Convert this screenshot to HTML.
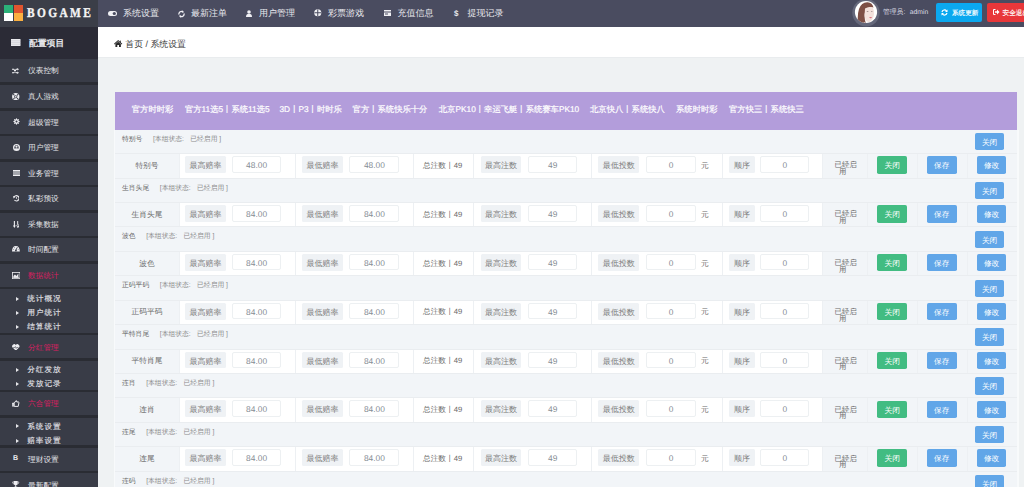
<!DOCTYPE html><html><head><meta charset="utf-8"><style>
*{margin:0;padding:0;box-sizing:border-box}
html,body{width:1024px;height:489px;overflow:hidden;background:#eff2f3;font-family:"Liberation Sans",sans-serif;position:relative;text-rendering:geometricPrecision}
.a{position:absolute}
.logo{left:0;top:0;width:98px;height:27px;background:#3b3e48}
.nav{left:98px;top:0;width:926px;height:27px;background:#4a4c60}
.nt{color:#e9e9ee;font-size:9px;line-height:9px;white-space:nowrap}
.side{left:0;top:27px;width:98px;height:462px;background:#393c47}
.sh{left:0;top:27px;width:98px;height:32.2px;background:#2b2b36}
.sep{left:0;width:98px;height:2.6px;background:#2a2c33}
.si{color:#e4e4e8;font-size:7.7px;line-height:8px;white-space:nowrap;left:28px}
.si.act{color:#d81f61}
.ss{color:#e2e2e8;font-size:7.68px;line-height:8px;letter-spacing:0.95px;white-space:nowrap;left:27.2px;-webkit-text-stroke:0.12px #e2e2e8}
.tri{width:0;height:0;border-left:3.2px solid #e6e6ea;border-top:2.3px solid transparent;border-bottom:2.3px solid transparent;left:16.2px}
.bc{left:98px;top:27px;width:926px;height:31px;background:#fff;border-bottom:1px solid #e9ecee}
.purple{left:114.8px;top:91.5px;width:902.2px;height:38.2px;background:#b39ddb}
.tab{color:#fff;font-size:8.32px;line-height:9px;white-space:nowrap;top:105px;-webkit-text-stroke:0.2px #fff}
.tbl{left:115.3px;top:129.7px;width:902px;height:360px;background:#f2f5f8}
.ttl{font-size:6.8px;line-height:7px;color:#666;white-space:nowrap}
.ttl .st{color:#8a8a8a}
.row{left:115.3px;width:902px;height:25.4px;border-top:1px solid #eaedf0;border-bottom:1px solid #eaedf0;background:#f2f5f8}
.cell{top:0;bottom:0;border-left:1px solid #edf0f3}
.w{background:#fff}
.lbl{background:#eff2f5;color:#7a7a7a;font-size:8px;line-height:19.1px;text-align:center;height:16.8px;border-radius:1.5px;white-space:nowrap}
.inp{background:#fff;border:0.7px solid #edf0f2;border-radius:2px;color:#858c94;font-size:8.4px;line-height:16.6px;text-align:center;height:16.6px}
.txt{color:#6a6a6a;font-size:7.7px;line-height:8px;white-space:nowrap}
.btn{color:#fff;font-size:7.7px;text-align:center;height:17.4px;line-height:19px;width:29.6px;border-radius:1.8px;white-space:nowrap}
.blue{background:#61a6e8}
.green{background:#42bc82}
</style></head><body>
<div class="a logo"></div>
<div class="a" style="left:4px;top:5px;width:9.2px;height:7.6px;background:#2bb179"></div>
<div class="a" style="left:14px;top:5px;width:9.2px;height:7.6px;background:#e0552f"></div>
<div class="a" style="left:4px;top:13px;width:9.2px;height:8px;background:#ffffff"></div>
<div class="a" style="left:14px;top:13px;width:9.2px;height:8px;background:#fbb040"></div>
<div class="a" style="left:27.3px;top:5.4px;font-family:'Liberation Serif',serif;font-weight:bold;font-size:13.4px;line-height:16px;color:#f4f4f4;letter-spacing:2.8px;white-space:nowrap;-webkit-text-stroke:0.35px #f4f4f4;transform:scaleX(0.85);transform-origin:0 0">BOGAME</div>
<div class="a nav"></div>
<div class="a nt" style="left:123px;top:9.3px">系统设置</div>
<div class="a nt" style="left:191px;top:9.3px">最新注单</div>
<div class="a nt" style="left:259px;top:9.3px">用户管理</div>
<div class="a nt" style="left:328px;top:9.3px">彩票游戏</div>
<div class="a nt" style="left:397.5px;top:9.3px">充值信息</div>
<div class="a nt" style="left:467.5px;top:9.3px">提现记录</div>
<svg class="a" style="left:107.6px;top:11.2px" width="9" height="5" viewBox="0 0 9 5"><rect x="0" y="0" width="9" height="5" rx="2.5" fill="#f0f0f4"/><circle cx="6.3" cy="2.5" r="1.6" fill="#4a4c60"/></svg>
<svg class="a" style="left:178px;top:10px" width="7" height="8" viewBox="0 0 7 8"><path d="M1 4.5 A2.6 2.6 0 0 1 5 1.8 M6 3.5 A2.6 2.6 0 0 1 2 6.2" stroke="#f0f0f4" stroke-width="1.3" fill="none"/><path d="M4.2 0.3 L6.2 2.2 L3.8 2.8Z M2.8 7.7 L0.8 5.8 L3.2 5.2Z" fill="#f0f0f4"/></svg>
<svg class="a" style="left:246px;top:9.5px" width="6" height="7" viewBox="0 0 6 7"><circle cx="3" cy="2" r="1.8" fill="#f0f0f4"/><path d="M0 7 Q0 3.8 3 3.8 Q6 3.8 6 7Z" fill="#f0f0f4"/></svg>
<svg class="a" style="left:314px;top:9.2px" width="7.5" height="7.5" viewBox="0 0 8 8"><circle cx="4" cy="4" r="3.8" fill="#f0f0f4"/><path d="M4 0.5V7.5M0.5 4H7.5" stroke="#4a4c60" stroke-width="1.1"/></svg>
<svg class="a" style="left:384px;top:10px" width="7" height="6" viewBox="0 0 7 6"><rect x="0" y="0" width="7" height="6" fill="#f0f0f4"/><rect x="0" y="1.5" width="7" height="1" fill="#4a4c60"/><rect x="1" y="3.5" width="3" height="1" fill="#4a4c60"/></svg>
<div class="a nt" style="left:454px;top:9px;font-size:8px;font-weight:bold">$</div>
<svg class="a" style="left:852px;top:-1px" width="28" height="28" viewBox="0 0 28 28"><circle cx="14" cy="13.7" r="13.7" fill="#64677a"/><circle cx="14" cy="13" r="11.1" fill="#ffffff"/><clipPath id="cp"><circle cx="14" cy="13" r="11.1"/></clipPath><g clip-path="url(#cp)"><path d="M6 26 Q5 16 7 10 Q9.5 3 15.5 3.2 Q20.5 3.6 21.5 8.5 Q18 7.5 15 9.5 Q12.5 12 12.5 17 Q12.8 22 14.5 26Z" fill="#7e4f45"/><path d="M13 9.5 Q16 7.2 20.5 8.2 Q22.5 11 22 15 Q21.5 20 18.5 22.5 Q15.5 24 13.5 21 Q12.3 17 13 9.5Z" fill="#f3e1dc"/><path d="M12 23 Q16 26 22 23.5 L24 28 L11 28Z" fill="#eee4e2"/><ellipse cx="18.6" cy="18.6" rx="1.4" ry="0.6" fill="#d9707e"/><ellipse cx="15.6" cy="12.6" rx="1.1" ry="0.45" fill="#7a6a6a"/><ellipse cx="19.8" cy="12.6" rx="0.9" ry="0.45" fill="#7a6a6a"/></g></svg>
<div class="a" style="left:883px;top:8.6px;font-size:6.8px;line-height:7px;color:#dcdce4;white-space:nowrap">管理员:<span style="display:inline-block;width:4.4px"></span>admin</div>
<div class="a" style="left:936px;top:2.7px;width:46px;height:19px;background:#0ba8ef;border-radius:2px"></div>
<svg class="a" style="left:941px;top:8.5px" width="7" height="7" viewBox="0 0 7 7"><path d="M1 3 A2.6 2.6 0 0 1 5.6 2 M6 4 A2.6 2.6 0 0 1 1.4 5" stroke="#fff" stroke-width="1.2" fill="none"/><path d="M6.5 0.5 L6.5 3 L4 3Z M0.5 6.5 L0.5 4 L3 4Z" fill="#fff"/></svg>
<div class="a" style="left:952px;top:9.6px;font-size:6.6px;line-height:7px;color:#fff;-webkit-text-stroke:0.15px #fff;white-space:nowrap">系统更新</div>
<div class="a" style="left:987px;top:2.7px;width:45px;height:19px;background:#e8373a;border-radius:2px"></div>
<svg class="a" style="left:993px;top:8.7px" width="6.5" height="6" viewBox="0 0 6.5 6"><path d="M2.5 0.5H0.5V5.5H2.5" stroke="#fff" stroke-width="1" fill="none"/><path d="M2 2.2H4V0.5L6.5 3L4 5.5V3.8H2Z" fill="#fff"/></svg>
<div class="a" style="left:1002.6px;top:9.6px;font-size:6.6px;line-height:7px;color:#fff;-webkit-text-stroke:0.15px #fff;white-space:nowrap">安全退出</div>
<div class="a side"></div>
<div class="a sh"></div>
<svg class="a" style="left:11px;top:38.5px" width="9.5" height="7.5" viewBox="0 0 9.5 7.5"><rect width="9.5" height="7.5" fill="#e8e8ec"/><path d="M0 1.8H9.5M0 3.6H9.5M0 5.4H9.5" stroke="#bdbdc6" stroke-width="0.4"/></svg>
<div class="a" style="left:29px;top:39px;font-size:8.8px;line-height:9px;color:#f0f0f4;-webkit-text-stroke:0.3px #f0f0f4;white-space:nowrap">配置项目</div>
<div class="a si" style="top:67.40px">仪表控制</div>
<svg class="a" style="left:12.4px;top:calc(70.70px - 3px)" width="7" height="6" viewBox="0 0 7 6"><path d="M0 1.2H1.8L4.2 4.8H5.6M0 4.8H1.8L4.2 1.2H5.6" stroke="#ededf1" stroke-width="1.1" fill="none"/><path d="M5.2 0L7 1.2L5.2 2.4Z M5.2 3.6L7 4.8L5.2 6Z" fill="#ededf1"/></svg>
<div class="a sep" style="top:82.40px"></div>
<div class="a si" style="top:92.95px">真人游戏</div>
<svg class="a" style="left:12.3px;top:calc(96.25px - 3.7px)" width="7.5" height="7.5" viewBox="0 0 8 8"><circle cx="4" cy="4" r="3.9" fill="#ededf1"/><path d="M1.3 1.3L2.6 2.6M6.7 1.3L5.4 2.6M1.3 6.7L2.6 5.4M6.7 6.7L5.4 5.4" stroke="#393c47" stroke-width="1.1"/><circle cx="4" cy="4" r="1.7" fill="#393c47"/><circle cx="4" cy="4" r="0.9" fill="#ededf1"/></svg>
<div class="a sep" style="top:107.95px"></div>
<div class="a si" style="top:118.50px">超级管理</div>
<svg class="a" style="left:12.6px;top:calc(121.80px - 3.5px)" width="7" height="7" viewBox="-0.5 -0.5 7 7"><circle cx="3" cy="3" r="2.3" fill="#ededf1"/><rect x="2.45" y="-0.1" width="1.1" height="1.6" fill="#ededf1" transform="rotate(0 3 3)"/><rect x="2.45" y="-0.1" width="1.1" height="1.6" fill="#ededf1" transform="rotate(45 3 3)"/><rect x="2.45" y="-0.1" width="1.1" height="1.6" fill="#ededf1" transform="rotate(90 3 3)"/><rect x="2.45" y="-0.1" width="1.1" height="1.6" fill="#ededf1" transform="rotate(135 3 3)"/><rect x="2.45" y="-0.1" width="1.1" height="1.6" fill="#ededf1" transform="rotate(180 3 3)"/><rect x="2.45" y="-0.1" width="1.1" height="1.6" fill="#ededf1" transform="rotate(225 3 3)"/><rect x="2.45" y="-0.1" width="1.1" height="1.6" fill="#ededf1" transform="rotate(270 3 3)"/><rect x="2.45" y="-0.1" width="1.1" height="1.6" fill="#ededf1" transform="rotate(315 3 3)"/><circle cx="3" cy="3" r="1" fill="#393c47"/></svg>
<div class="a sep" style="top:133.50px"></div>
<div class="a si" style="top:144.05px">用户管理</div>
<svg class="a" style="left:12.8px;top:calc(147.35px - 3.5px)" width="7" height="7" viewBox="0 0 7 7"><circle cx="3.5" cy="3.5" r="3.5" fill="#ededf1"/><path d="M1.3 4.6Q1.3 0.9 3.5 0.9Q5.7 0.9 5.7 4.6Z" fill="#393c47"/><circle cx="3.5" cy="2.7" r="1.1" fill="#ededf1"/><path d="M1.6 5.5Q3.5 3.6 5.4 5.5Z" fill="#ededf1"/></svg>
<div class="a sep" style="top:159.05px"></div>
<div class="a si" style="top:169.60px">业务管理</div>
<svg class="a" style="left:12.6px;top:calc(172.90px - 3px)" width="7.4" height="6" viewBox="0 0 7.4 6"><rect width="7.4" height="6" fill="#ededf1"/><path d="M0 2H7.4M0 4H7.4" stroke="#393c47" stroke-width="0.8"/></svg>
<div class="a sep" style="top:184.60px"></div>
<div class="a si" style="top:195.15px">私彩预设</div>
<svg class="a" style="left:12.6px;top:calc(198.45px - 3.3px)" width="6.6" height="6.6" viewBox="0 0 7 7"><path d="M1.2 2.2A2.8 2.8 0 1 1 1.5 5.3" stroke="#ededf1" stroke-width="1.2" fill="none"/><path d="M0 1L2.6 1.8L0.6 3.6Z" fill="#ededf1"/><path d="M3.6 2V3.6L4.6 4.4" stroke="#ededf1" stroke-width="0.9" fill="none"/></svg>
<div class="a sep" style="top:210.15px"></div>
<div class="a si" style="top:220.70px">采集数据</div>
<svg class="a" style="left:12.5px;top:calc(224.00px - 3.5px)" width="6.8" height="7" viewBox="0 0 6.8 7"><path d="M1.4 0V5.2" stroke="#ededf1" stroke-width="1.1"/><path d="M0 4.6H2.8L1.4 7Z" fill="#ededf1"/><path d="M4.7 0.2V3" stroke="#ededf1" stroke-width="1"/><path d="M4.0 0.7L4.7 0.2" stroke="#ededf1" stroke-width="0.6"/><circle cx="4.9" cy="4.6" r="1.05" fill="none" stroke="#ededf1" stroke-width="0.9"/><path d="M5.9 4.7Q5.9 6.6 4.2 6.9" stroke="#ededf1" stroke-width="0.9" fill="none"/></svg>
<div class="a sep" style="top:235.70px"></div>
<div class="a si" style="top:246.25px">时间配置</div>
<svg class="a" style="left:12.2px;top:calc(249.55px - 3.3px)" width="7.8" height="6" viewBox="0 0 7.8 6"><path d="M0 5.6Q0 0 3.9 0Q7.8 0 7.8 5.6Z" fill="#ededf1"/><circle cx="1.6" cy="3.6" r="0.45" fill="#393c47"/><circle cx="2.3" cy="1.8" r="0.45" fill="#393c47"/><circle cx="5.5" cy="1.8" r="0.45" fill="#393c47"/><circle cx="6.2" cy="3.6" r="0.45" fill="#393c47"/><path d="M3.9 4.6L4.9 1.6" stroke="#393c47" stroke-width="0.8"/><circle cx="3.9" cy="4.5" r="0.9" fill="#393c47"/></svg>
<div class="a sep" style="top:261.25px"></div>
<div class="a si act" style="top:271.80px">数据统计</div>
<svg class="a" style="left:12px;top:calc(275.10px - 3.6px)" width="8.4" height="7.2" viewBox="0 0 8.4 7.2"><rect x="0.4" y="0.4" width="7.6" height="6.4" fill="none" stroke="#ededf1" stroke-width="0.8"/><path d="M1.4 5.8V4L3 2.6L4.4 4L6.4 1.6V5.8Z" fill="#ededf1"/><rect x="1.2" y="5.4" width="6" height="0.9" fill="#ededf1"/></svg>
<div class="a sep" style="top:286.80px"></div>
<div class="a tri" style="top:296.70px"></div>
<div class="a ss" style="top:294.90px">统计概况</div>
<div class="a tri" style="top:310.80px"></div>
<div class="a ss" style="top:309.00px">用户统计</div>
<div class="a tri" style="top:325.00px"></div>
<div class="a ss" style="top:323.20px">结算统计</div>
<div class="a sep" style="top:332.90px"></div>
<div class="a si act" style="top:343.60px">分红管理</div>
<svg class="a" style="left:12.4px;top:calc(346.90px - 3.3px)" width="7.6" height="6.8" viewBox="0 0 8 7"><path d="M4 7L0.6 3.6A2 2 0 0 1 4 1A2 2 0 0 1 7.4 3.6Z" fill="#ededf1"/><path d="M1.2 3.6H3L3.6 2.6L4.4 4.6L5 3.6H6.8" stroke="#393c47" stroke-width="0.6" fill="none"/></svg>
<div class="a sep" style="top:358.40px"></div>
<div class="a tri" style="top:367.70px"></div>
<div class="a ss" style="top:365.90px">分红发放</div>
<div class="a tri" style="top:381.90px"></div>
<div class="a ss" style="top:380.10px">发放记录</div>
<div class="a sep" style="top:389.60px"></div>
<div class="a si act" style="top:400.00px">六合管理</div>
<svg class="a" style="left:12.4px;top:calc(403.30px - 3.5px)" width="7.4" height="7" viewBox="0 0 7.4 7"><path d="M0.5 3.2H2.2L4 0.6Q5 0.6 4.8 2H6.6Q7.2 2.2 6.9 3L6.2 6.4H2.2V3.2" stroke="#ededf1" stroke-width="1" fill="none"/><rect x="0.2" y="3" width="1.6" height="3.6" fill="#ededf1"/></svg>
<div class="a sep" style="top:415.20px"></div>
<div class="a tri" style="top:424.40px"></div>
<div class="a ss" style="top:422.60px">系统设置</div>
<div class="a tri" style="top:438.60px"></div>
<div class="a ss" style="top:436.80px">赔率设置</div>
<div class="a sep" style="top:445.20px"></div>
<div class="a si" style="top:455.85px">理财设置</div>
<div class="a" style="left:13px;top:calc(459.15px - 4px);font-size:7px;font-weight:bold;color:#ededf1;line-height:8px">B</div>
<div class="a sep" style="top:470.60px"></div>
<div class="a si" style="top:481.50px">最新配置</div>
<svg class="a" style="left:12.4px;top:calc(484.80px - 3.4px)" width="7.4" height="6.8" viewBox="0 0 7.4 7"><path d="M1.6 0H5.8V2.6Q5.8 4.4 3.7 4.6Q1.6 4.4 1.6 2.6Z M3.2 4.6H4.2V5.8H5.4V7H2V5.8H3.2Z" fill="#ededf1"/><path d="M1.6 1H0.4Q0.4 3 2 3.2M5.8 1H7Q7 3 5.4 3.2" stroke="#ededf1" stroke-width="0.6" fill="none"/></svg>
<div class="a bc"></div>
<svg class="a" style="left:114.3px;top:39.6px" width="8.3" height="7.2" viewBox="0 0 8.3 7.2"><path d="M0 3.7L4.15 0L8.3 3.7L7.6 4.4L4.15 1.3L0.7 4.4Z" fill="#2a2a2a"/><path d="M1.4 4.1L4.15 1.8L6.9 4.1V7.2H5.0V5.0H3.3V7.2H1.4Z" fill="#2a2a2a"/><rect x="5.9" y="0.6" width="0.9" height="2" fill="#2a2a2a"/></svg>
<div class="a" style="left:125.3px;top:39.6px;font-size:8.9px;line-height:9px;color:#3a3a3a;white-space:nowrap">首页 / 系统设置</div>
<div class="a purple"></div>
<div class="a tab" style="left:131.8px">官方时时彩</div>
<div class="a tab" style="left:184.9px">官方11选5丨系统11选5</div>
<div class="a tab" style="left:279.5px">3D丨P3丨时时乐</div>
<div class="a tab" style="left:352.6px">官方丨系统快乐十分</div>
<div class="a tab" style="left:438.8px">北京PK10丨幸运飞艇丨系统赛车PK10</div>
<div class="a tab" style="left:590px">北京快八丨系统快八</div>
<div class="a tab" style="left:676px">系统时时彩</div>
<div class="a tab" style="left:729px">官方快三丨系统快三</div>
<div class="a tbl"></div>
<div class="a" style="left:113.8px;top:129.7px;width:1.5px;height:360px;background:#f8fafb"></div>
<div class="a" style="left:1017.3px;top:129.7px;width:1.5px;height:360px;background:#f8fafb"></div>
<div class="a ttl" style="left:122px;top:135.70px">特别号<span style="display:inline-block;width:10.6px"></span><span class="st">[本组状态:<span style="display:inline-block;width:6.3px"></span>已经启用&nbsp;]</span></div>
<div class="a btn blue" style="left:974.8px;top:133.00px">关闭</div>
<div class="a row" style="top:153.20px">
<div class="a cell" style="left:0.00px;width:63.30px;border-left:none"></div>
<div class="a cell w" style="left:63.30px;width:116.60px"></div>
<div class="a cell w" style="left:179.90px;width:118.20px"></div>
<div class="a cell w" style="left:298.10px;width:59.80px"></div>
<div class="a cell w" style="left:357.90px;width:118.30px"></div>
<div class="a cell w" style="left:476.20px;width:131.00px"></div>
<div class="a cell w" style="left:607.20px;width:99.50px"></div>
<div class="a cell" style="left:706.70px;width:45.20px"></div>
<div class="a cell" style="left:751.90px;width:49.80px"></div>
<div class="a cell" style="left:801.70px;width:50.40px"></div>
<div class="a cell" style="left:852.10px;width:49.80px"></div>
<div class="a txt" style="left:0;width:63.3px;text-align:center;top:7.7px">特别号</div>
<div class="a lbl" style="left:69.90px;width:40.5px;top:2.0px">最高赔率</div>
<div class="a inp" style="left:116.50px;width:49.6px;top:2.0px">48.00</div>
<div class="a lbl" style="left:186.70px;width:40.9px;top:2.0px">最低赔率</div>
<div class="a inp" style="left:234.00px;width:50.2px;top:2.0px">48.00</div>
<div class="a txt" style="left:307.70px;top:7.7px">总注数丨49</div>
<div class="a lbl" style="left:365.40px;width:40.5px;top:2.0px">最高注数</div>
<div class="a inp" style="left:412.70px;width:49.4px;top:2.0px">49</div>
<div class="a lbl" style="left:483.00px;width:40.7px;top:2.0px">最低投数</div>
<div class="a inp" style="left:531.10px;width:49.3px;top:2.0px">0</div>
<div class="a txt" style="left:585.70px;top:7.7px">元</div>
<div class="a lbl" style="left:614.00px;width:25.4px;top:2.0px">顺序</div>
<div class="a inp" style="left:644.90px;width:49.2px;top:2.0px">0</div>
<div class="a txt" style="left:719.30px;top:7.3px;line-height:7px;font-size:7.4px">已经启</div>
<div class="a txt" style="left:723.70px;top:13.9px;line-height:7px;font-size:7.4px">用</div>
<div class="a btn green" style="left:762.10px;top:2.2px">关闭</div>
<div class="a btn blue" style="left:811.70px;top:2.2px">保存</div>
<div class="a btn blue" style="left:861.50px;top:2.2px">修改</div>
</div>
<div class="a ttl" style="left:122px;top:184.55px">生肖头尾<span style="display:inline-block;width:10.6px"></span><span class="st">[本组状态:<span style="display:inline-block;width:6.3px"></span>已经启用&nbsp;]</span></div>
<div class="a btn blue" style="left:974.8px;top:181.85px">关闭</div>
<div class="a row" style="top:202.05px">
<div class="a cell" style="left:0.00px;width:63.30px;border-left:none"></div>
<div class="a cell w" style="left:63.30px;width:116.60px"></div>
<div class="a cell w" style="left:179.90px;width:118.20px"></div>
<div class="a cell w" style="left:298.10px;width:59.80px"></div>
<div class="a cell w" style="left:357.90px;width:118.30px"></div>
<div class="a cell w" style="left:476.20px;width:131.00px"></div>
<div class="a cell w" style="left:607.20px;width:99.50px"></div>
<div class="a cell" style="left:706.70px;width:45.20px"></div>
<div class="a cell" style="left:751.90px;width:49.80px"></div>
<div class="a cell" style="left:801.70px;width:50.40px"></div>
<div class="a cell" style="left:852.10px;width:49.80px"></div>
<div class="a txt" style="left:0;width:63.3px;text-align:center;top:7.7px">生肖头尾</div>
<div class="a lbl" style="left:69.90px;width:40.5px;top:2.0px">最高赔率</div>
<div class="a inp" style="left:116.50px;width:49.6px;top:2.0px">84.00</div>
<div class="a lbl" style="left:186.70px;width:40.9px;top:2.0px">最低赔率</div>
<div class="a inp" style="left:234.00px;width:50.2px;top:2.0px">84.00</div>
<div class="a txt" style="left:307.70px;top:7.7px">总注数丨49</div>
<div class="a lbl" style="left:365.40px;width:40.5px;top:2.0px">最高注数</div>
<div class="a inp" style="left:412.70px;width:49.4px;top:2.0px">49</div>
<div class="a lbl" style="left:483.00px;width:40.7px;top:2.0px">最低投数</div>
<div class="a inp" style="left:531.10px;width:49.3px;top:2.0px">0</div>
<div class="a txt" style="left:585.70px;top:7.7px">元</div>
<div class="a lbl" style="left:614.00px;width:25.4px;top:2.0px">顺序</div>
<div class="a inp" style="left:644.90px;width:49.2px;top:2.0px">0</div>
<div class="a txt" style="left:719.30px;top:7.3px;line-height:7px;font-size:7.4px">已经启</div>
<div class="a txt" style="left:723.70px;top:13.9px;line-height:7px;font-size:7.4px">用</div>
<div class="a btn green" style="left:762.10px;top:2.2px">关闭</div>
<div class="a btn blue" style="left:811.70px;top:2.2px">保存</div>
<div class="a btn blue" style="left:861.50px;top:2.2px">修改</div>
</div>
<div class="a ttl" style="left:122px;top:233.40px">波色<span style="display:inline-block;width:10.6px"></span><span class="st">[本组状态:<span style="display:inline-block;width:6.3px"></span>已经启用&nbsp;]</span></div>
<div class="a btn blue" style="left:974.8px;top:230.70px">关闭</div>
<div class="a row" style="top:250.90px">
<div class="a cell" style="left:0.00px;width:63.30px;border-left:none"></div>
<div class="a cell w" style="left:63.30px;width:116.60px"></div>
<div class="a cell w" style="left:179.90px;width:118.20px"></div>
<div class="a cell w" style="left:298.10px;width:59.80px"></div>
<div class="a cell w" style="left:357.90px;width:118.30px"></div>
<div class="a cell w" style="left:476.20px;width:131.00px"></div>
<div class="a cell w" style="left:607.20px;width:99.50px"></div>
<div class="a cell" style="left:706.70px;width:45.20px"></div>
<div class="a cell" style="left:751.90px;width:49.80px"></div>
<div class="a cell" style="left:801.70px;width:50.40px"></div>
<div class="a cell" style="left:852.10px;width:49.80px"></div>
<div class="a txt" style="left:0;width:63.3px;text-align:center;top:7.7px">波色</div>
<div class="a lbl" style="left:69.90px;width:40.5px;top:2.0px">最高赔率</div>
<div class="a inp" style="left:116.50px;width:49.6px;top:2.0px">84.00</div>
<div class="a lbl" style="left:186.70px;width:40.9px;top:2.0px">最低赔率</div>
<div class="a inp" style="left:234.00px;width:50.2px;top:2.0px">84.00</div>
<div class="a txt" style="left:307.70px;top:7.7px">总注数丨49</div>
<div class="a lbl" style="left:365.40px;width:40.5px;top:2.0px">最高注数</div>
<div class="a inp" style="left:412.70px;width:49.4px;top:2.0px">49</div>
<div class="a lbl" style="left:483.00px;width:40.7px;top:2.0px">最低投数</div>
<div class="a inp" style="left:531.10px;width:49.3px;top:2.0px">0</div>
<div class="a txt" style="left:585.70px;top:7.7px">元</div>
<div class="a lbl" style="left:614.00px;width:25.4px;top:2.0px">顺序</div>
<div class="a inp" style="left:644.90px;width:49.2px;top:2.0px">0</div>
<div class="a txt" style="left:719.30px;top:7.3px;line-height:7px;font-size:7.4px">已经启</div>
<div class="a txt" style="left:723.70px;top:13.9px;line-height:7px;font-size:7.4px">用</div>
<div class="a btn green" style="left:762.10px;top:2.2px">关闭</div>
<div class="a btn blue" style="left:811.70px;top:2.2px">保存</div>
<div class="a btn blue" style="left:861.50px;top:2.2px">修改</div>
</div>
<div class="a ttl" style="left:122px;top:282.25px">正码平码<span style="display:inline-block;width:10.6px"></span><span class="st">[本组状态:<span style="display:inline-block;width:6.3px"></span>已经启用&nbsp;]</span></div>
<div class="a btn blue" style="left:974.8px;top:279.55px">关闭</div>
<div class="a row" style="top:299.75px">
<div class="a cell" style="left:0.00px;width:63.30px;border-left:none"></div>
<div class="a cell w" style="left:63.30px;width:116.60px"></div>
<div class="a cell w" style="left:179.90px;width:118.20px"></div>
<div class="a cell w" style="left:298.10px;width:59.80px"></div>
<div class="a cell w" style="left:357.90px;width:118.30px"></div>
<div class="a cell w" style="left:476.20px;width:131.00px"></div>
<div class="a cell w" style="left:607.20px;width:99.50px"></div>
<div class="a cell" style="left:706.70px;width:45.20px"></div>
<div class="a cell" style="left:751.90px;width:49.80px"></div>
<div class="a cell" style="left:801.70px;width:50.40px"></div>
<div class="a cell" style="left:852.10px;width:49.80px"></div>
<div class="a txt" style="left:0;width:63.3px;text-align:center;top:7.7px">正码平码</div>
<div class="a lbl" style="left:69.90px;width:40.5px;top:2.0px">最高赔率</div>
<div class="a inp" style="left:116.50px;width:49.6px;top:2.0px">84.00</div>
<div class="a lbl" style="left:186.70px;width:40.9px;top:2.0px">最低赔率</div>
<div class="a inp" style="left:234.00px;width:50.2px;top:2.0px">84.00</div>
<div class="a txt" style="left:307.70px;top:7.7px">总注数丨49</div>
<div class="a lbl" style="left:365.40px;width:40.5px;top:2.0px">最高注数</div>
<div class="a inp" style="left:412.70px;width:49.4px;top:2.0px">49</div>
<div class="a lbl" style="left:483.00px;width:40.7px;top:2.0px">最低投数</div>
<div class="a inp" style="left:531.10px;width:49.3px;top:2.0px">0</div>
<div class="a txt" style="left:585.70px;top:7.7px">元</div>
<div class="a lbl" style="left:614.00px;width:25.4px;top:2.0px">顺序</div>
<div class="a inp" style="left:644.90px;width:49.2px;top:2.0px">0</div>
<div class="a txt" style="left:719.30px;top:7.3px;line-height:7px;font-size:7.4px">已经启</div>
<div class="a txt" style="left:723.70px;top:13.9px;line-height:7px;font-size:7.4px">用</div>
<div class="a btn green" style="left:762.10px;top:2.2px">关闭</div>
<div class="a btn blue" style="left:811.70px;top:2.2px">保存</div>
<div class="a btn blue" style="left:861.50px;top:2.2px">修改</div>
</div>
<div class="a ttl" style="left:122px;top:331.10px">平特肖尾<span style="display:inline-block;width:10.6px"></span><span class="st">[本组状态:<span style="display:inline-block;width:6.3px"></span>已经启用&nbsp;]</span></div>
<div class="a btn blue" style="left:974.8px;top:328.40px">关闭</div>
<div class="a row" style="top:348.60px">
<div class="a cell" style="left:0.00px;width:63.30px;border-left:none"></div>
<div class="a cell w" style="left:63.30px;width:116.60px"></div>
<div class="a cell w" style="left:179.90px;width:118.20px"></div>
<div class="a cell w" style="left:298.10px;width:59.80px"></div>
<div class="a cell w" style="left:357.90px;width:118.30px"></div>
<div class="a cell w" style="left:476.20px;width:131.00px"></div>
<div class="a cell w" style="left:607.20px;width:99.50px"></div>
<div class="a cell" style="left:706.70px;width:45.20px"></div>
<div class="a cell" style="left:751.90px;width:49.80px"></div>
<div class="a cell" style="left:801.70px;width:50.40px"></div>
<div class="a cell" style="left:852.10px;width:49.80px"></div>
<div class="a txt" style="left:0;width:63.3px;text-align:center;top:7.7px">平特肖尾</div>
<div class="a lbl" style="left:69.90px;width:40.5px;top:2.0px">最高赔率</div>
<div class="a inp" style="left:116.50px;width:49.6px;top:2.0px">84.00</div>
<div class="a lbl" style="left:186.70px;width:40.9px;top:2.0px">最低赔率</div>
<div class="a inp" style="left:234.00px;width:50.2px;top:2.0px">84.00</div>
<div class="a txt" style="left:307.70px;top:7.7px">总注数丨49</div>
<div class="a lbl" style="left:365.40px;width:40.5px;top:2.0px">最高注数</div>
<div class="a inp" style="left:412.70px;width:49.4px;top:2.0px">49</div>
<div class="a lbl" style="left:483.00px;width:40.7px;top:2.0px">最低投数</div>
<div class="a inp" style="left:531.10px;width:49.3px;top:2.0px">0</div>
<div class="a txt" style="left:585.70px;top:7.7px">元</div>
<div class="a lbl" style="left:614.00px;width:25.4px;top:2.0px">顺序</div>
<div class="a inp" style="left:644.90px;width:49.2px;top:2.0px">0</div>
<div class="a txt" style="left:719.30px;top:7.3px;line-height:7px;font-size:7.4px">已经启</div>
<div class="a txt" style="left:723.70px;top:13.9px;line-height:7px;font-size:7.4px">用</div>
<div class="a btn green" style="left:762.10px;top:2.2px">关闭</div>
<div class="a btn blue" style="left:811.70px;top:2.2px">保存</div>
<div class="a btn blue" style="left:861.50px;top:2.2px">修改</div>
</div>
<div class="a ttl" style="left:122px;top:379.95px">连肖<span style="display:inline-block;width:10.6px"></span><span class="st">[本组状态:<span style="display:inline-block;width:6.3px"></span>已经启用&nbsp;]</span></div>
<div class="a btn blue" style="left:974.8px;top:377.25px">关闭</div>
<div class="a row" style="top:397.45px">
<div class="a cell" style="left:0.00px;width:63.30px;border-left:none"></div>
<div class="a cell w" style="left:63.30px;width:116.60px"></div>
<div class="a cell w" style="left:179.90px;width:118.20px"></div>
<div class="a cell w" style="left:298.10px;width:59.80px"></div>
<div class="a cell w" style="left:357.90px;width:118.30px"></div>
<div class="a cell w" style="left:476.20px;width:131.00px"></div>
<div class="a cell w" style="left:607.20px;width:99.50px"></div>
<div class="a cell" style="left:706.70px;width:45.20px"></div>
<div class="a cell" style="left:751.90px;width:49.80px"></div>
<div class="a cell" style="left:801.70px;width:50.40px"></div>
<div class="a cell" style="left:852.10px;width:49.80px"></div>
<div class="a txt" style="left:0;width:63.3px;text-align:center;top:7.7px">连肖</div>
<div class="a lbl" style="left:69.90px;width:40.5px;top:2.0px">最高赔率</div>
<div class="a inp" style="left:116.50px;width:49.6px;top:2.0px">84.00</div>
<div class="a lbl" style="left:186.70px;width:40.9px;top:2.0px">最低赔率</div>
<div class="a inp" style="left:234.00px;width:50.2px;top:2.0px">84.00</div>
<div class="a txt" style="left:307.70px;top:7.7px">总注数丨49</div>
<div class="a lbl" style="left:365.40px;width:40.5px;top:2.0px">最高注数</div>
<div class="a inp" style="left:412.70px;width:49.4px;top:2.0px">49</div>
<div class="a lbl" style="left:483.00px;width:40.7px;top:2.0px">最低投数</div>
<div class="a inp" style="left:531.10px;width:49.3px;top:2.0px">0</div>
<div class="a txt" style="left:585.70px;top:7.7px">元</div>
<div class="a lbl" style="left:614.00px;width:25.4px;top:2.0px">顺序</div>
<div class="a inp" style="left:644.90px;width:49.2px;top:2.0px">0</div>
<div class="a txt" style="left:719.30px;top:7.3px;line-height:7px;font-size:7.4px">已经启</div>
<div class="a txt" style="left:723.70px;top:13.9px;line-height:7px;font-size:7.4px">用</div>
<div class="a btn green" style="left:762.10px;top:2.2px">关闭</div>
<div class="a btn blue" style="left:811.70px;top:2.2px">保存</div>
<div class="a btn blue" style="left:861.50px;top:2.2px">修改</div>
</div>
<div class="a ttl" style="left:122px;top:428.80px">连尾<span style="display:inline-block;width:10.6px"></span><span class="st">[本组状态:<span style="display:inline-block;width:6.3px"></span>已经启用&nbsp;]</span></div>
<div class="a btn blue" style="left:974.8px;top:426.10px">关闭</div>
<div class="a row" style="top:446.30px">
<div class="a cell" style="left:0.00px;width:63.30px;border-left:none"></div>
<div class="a cell w" style="left:63.30px;width:116.60px"></div>
<div class="a cell w" style="left:179.90px;width:118.20px"></div>
<div class="a cell w" style="left:298.10px;width:59.80px"></div>
<div class="a cell w" style="left:357.90px;width:118.30px"></div>
<div class="a cell w" style="left:476.20px;width:131.00px"></div>
<div class="a cell w" style="left:607.20px;width:99.50px"></div>
<div class="a cell" style="left:706.70px;width:45.20px"></div>
<div class="a cell" style="left:751.90px;width:49.80px"></div>
<div class="a cell" style="left:801.70px;width:50.40px"></div>
<div class="a cell" style="left:852.10px;width:49.80px"></div>
<div class="a txt" style="left:0;width:63.3px;text-align:center;top:7.7px">连尾</div>
<div class="a lbl" style="left:69.90px;width:40.5px;top:2.0px">最高赔率</div>
<div class="a inp" style="left:116.50px;width:49.6px;top:2.0px">84.00</div>
<div class="a lbl" style="left:186.70px;width:40.9px;top:2.0px">最低赔率</div>
<div class="a inp" style="left:234.00px;width:50.2px;top:2.0px">84.00</div>
<div class="a txt" style="left:307.70px;top:7.7px">总注数丨49</div>
<div class="a lbl" style="left:365.40px;width:40.5px;top:2.0px">最高注数</div>
<div class="a inp" style="left:412.70px;width:49.4px;top:2.0px">49</div>
<div class="a lbl" style="left:483.00px;width:40.7px;top:2.0px">最低投数</div>
<div class="a inp" style="left:531.10px;width:49.3px;top:2.0px">0</div>
<div class="a txt" style="left:585.70px;top:7.7px">元</div>
<div class="a lbl" style="left:614.00px;width:25.4px;top:2.0px">顺序</div>
<div class="a inp" style="left:644.90px;width:49.2px;top:2.0px">0</div>
<div class="a txt" style="left:719.30px;top:7.3px;line-height:7px;font-size:7.4px">已经启</div>
<div class="a txt" style="left:723.70px;top:13.9px;line-height:7px;font-size:7.4px">用</div>
<div class="a btn green" style="left:762.10px;top:2.2px">关闭</div>
<div class="a btn blue" style="left:811.70px;top:2.2px">保存</div>
<div class="a btn blue" style="left:861.50px;top:2.2px">修改</div>
</div>
<div class="a ttl" style="left:122px;top:477.65px">连码<span style="display:inline-block;width:10.6px"></span><span class="st">[本组状态:<span style="display:inline-block;width:6.3px"></span>已经启用&nbsp;]</span></div>
<div class="a btn blue" style="left:974.8px;top:474.95px">关闭</div>
<div class="a row" style="top:495.15px">
<div class="a cell" style="left:0.00px;width:63.30px;border-left:none"></div>
<div class="a cell w" style="left:63.30px;width:116.60px"></div>
<div class="a cell w" style="left:179.90px;width:118.20px"></div>
<div class="a cell w" style="left:298.10px;width:59.80px"></div>
<div class="a cell w" style="left:357.90px;width:118.30px"></div>
<div class="a cell w" style="left:476.20px;width:131.00px"></div>
<div class="a cell w" style="left:607.20px;width:99.50px"></div>
<div class="a cell" style="left:706.70px;width:45.20px"></div>
<div class="a cell" style="left:751.90px;width:49.80px"></div>
<div class="a cell" style="left:801.70px;width:50.40px"></div>
<div class="a cell" style="left:852.10px;width:49.80px"></div>
<div class="a txt" style="left:0;width:63.3px;text-align:center;top:7.7px">连码</div>
<div class="a lbl" style="left:69.90px;width:40.5px;top:2.0px">最高赔率</div>
<div class="a inp" style="left:116.50px;width:49.6px;top:2.0px">84.00</div>
<div class="a lbl" style="left:186.70px;width:40.9px;top:2.0px">最低赔率</div>
<div class="a inp" style="left:234.00px;width:50.2px;top:2.0px">84.00</div>
<div class="a txt" style="left:307.70px;top:7.7px">总注数丨49</div>
<div class="a lbl" style="left:365.40px;width:40.5px;top:2.0px">最高注数</div>
<div class="a inp" style="left:412.70px;width:49.4px;top:2.0px">49</div>
<div class="a lbl" style="left:483.00px;width:40.7px;top:2.0px">最低投数</div>
<div class="a inp" style="left:531.10px;width:49.3px;top:2.0px">0</div>
<div class="a txt" style="left:585.70px;top:7.7px">元</div>
<div class="a lbl" style="left:614.00px;width:25.4px;top:2.0px">顺序</div>
<div class="a inp" style="left:644.90px;width:49.2px;top:2.0px">0</div>
<div class="a txt" style="left:719.30px;top:7.3px;line-height:7px;font-size:7.4px">已经启</div>
<div class="a txt" style="left:723.70px;top:13.9px;line-height:7px;font-size:7.4px">用</div>
<div class="a btn green" style="left:762.10px;top:2.2px">关闭</div>
<div class="a btn blue" style="left:811.70px;top:2.2px">保存</div>
<div class="a btn blue" style="left:861.50px;top:2.2px">修改</div>
</div>
<div class="a" style="left:0;top:486.7px;width:1024px;height:3px;background:#fff"></div>
</body></html>
